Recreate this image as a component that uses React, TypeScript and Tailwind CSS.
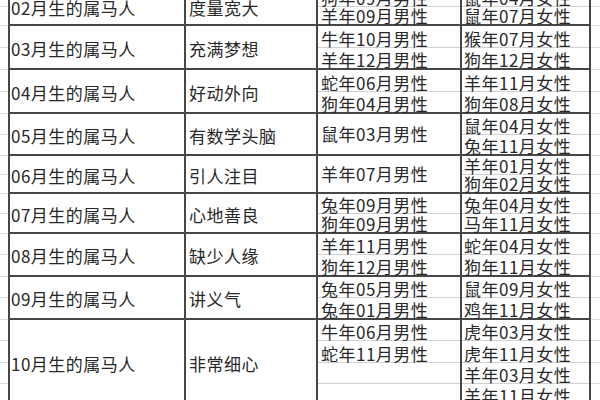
import React from "react";

type Row = {
  hs: string[];
  month: string;
  trait: string;
  male: string[];
  female: string[];
};

const rows: Row[] = [
  { hs: ["h-[19px]", "h-[19px]"], month: "02月生的属马人", trait: "度量宽大", male: ["狗年09月男性", "羊年09月男性"], female: ["鼠年04月女性", "鼠年07月女性"] },
  { hs: ["h-[22px]", "h-[22px]"], month: "03月生的属马人", trait: "充满梦想", male: ["牛年10月男性", "羊年12月男性"], female: ["猴年07月女性", "狗年12月女性"] },
  { hs: ["h-[22px]", "h-[22px]"], month: "04月生的属马人", trait: "好动外向", male: ["蛇年06月男性", "狗年04月男性"], female: ["羊年11月女性", "狗年08月女性"] },
  { hs: ["h-[21px]", "h-[21px]"], month: "05月生的属马人", trait: "有数学头脑", male: ["鼠年03月男性"], female: ["鼠年04月女性", "兔年11月女性"] },
  { hs: ["h-[19px]", "h-[19px]"], month: "06月生的属马人", trait: "引人注目", male: ["羊年07月男性"], female: ["羊年01月女性", "狗年02月女性"] },
  { hs: ["h-[20px]", "h-[20px]"], month: "07月生的属马人", trait: "心地善良", male: ["兔年09月男性", "狗年09月男性"], female: ["兔年04月女性", "马年11月女性"] },
  { hs: ["h-[21px]", "h-[22px]"], month: "08月生的属马人", trait: "缺少人缘", male: ["羊年11月男性", "狗年12月男性"], female: ["蛇年04月女性", "狗年11月女性"] },
  { hs: ["h-[21px]", "h-[22px]"], month: "09月生的属马人", trait: "讲义气", male: ["兔年05月男性", "兔年01月男性"], female: ["鼠年09月女性", "鸡年11月女性"] },
  { hs: ["h-[21px]", "h-[22px]", "h-[21px]", "h-[22px]"], month: "10月生的属马人", trait: "非常细心", male: ["牛年06月男性", "蛇年11月男性", "", ""], female: ["虎年03月女性", "虎年11月女性", "羊年03月女性", "羊年11月女性"] },
];

// stacked sub-cells; a single entry fills the whole row, centred
const SubCells = ({ items, hs, pad }: { items: string[]; hs: string[]; pad: string }) => {
  if (items.length === 1) {
    return (
      <div className={`flex-1 flex items-center ${pad} border-b-2 border-[#474747]`}>
        <span>{items[0]}</span>
      </div>
    );
  }
  return (
    <>
      {items.map((t, i) => (
        <div
          key={i}
          className={`${hs[i]} flex items-end ${pad} ${
            i === items.length - 1 ? "border-b-2 border-[#474747]" : "border-b border-[#d2d2d2]"
          }`}
        >
          <span className="leading-[17px]">{t}</span>
        </div>
      ))}
    </>
  );
};

const Gridlines = ({ hs }: { hs: string[] }) => (
  <>
    {hs.map((h, i) => (
      <div key={i} className={`${h} border-b border-[#dcdcdc]`} />
    ))}
  </>
);

export default function App() {
  return (
    <div
      className="w-[600px] h-[400px] overflow-hidden bg-white text-[17px] tracking-[0.5px] text-[#282828]"
      style={{ fontFamily: "'Noto Sans CJK SC', 'Noto Sans', sans-serif" }}
    >
      <div className="-mt-[12px] flex flex-col">
        {rows.map((r) => (
          <div key={r.month} className="flex">
            <div className="w-[8px] flex flex-col">
              <Gridlines hs={r.hs} />
            </div>
            <div className="w-[178px] flex items-center pl-[1px] pt-[3px] border-l-2 border-r-2 border-b-2 border-[#474747] whitespace-nowrap">
              {r.month}
            </div>
            <div className="w-[132px] flex items-center pl-[3px] pt-[3px] border-r-2 border-b-2 border-[#474747] whitespace-nowrap">
              {r.trait}
            </div>
            <div className="w-[144px] flex flex-col border-r-2 border-[#474747] whitespace-nowrap">
              <SubCells items={r.male} hs={r.hs} pad="pl-[3px]" />
            </div>
            <div className="w-[129px] flex flex-col border-r-2 border-[#474747] whitespace-nowrap">
              <SubCells items={r.female} hs={r.hs} pad="pl-[2px]" />
            </div>
            <div className="flex-1 flex flex-col">
              <Gridlines hs={r.hs} />
            </div>
          </div>
        ))}
      </div>
    </div>
  );
}
